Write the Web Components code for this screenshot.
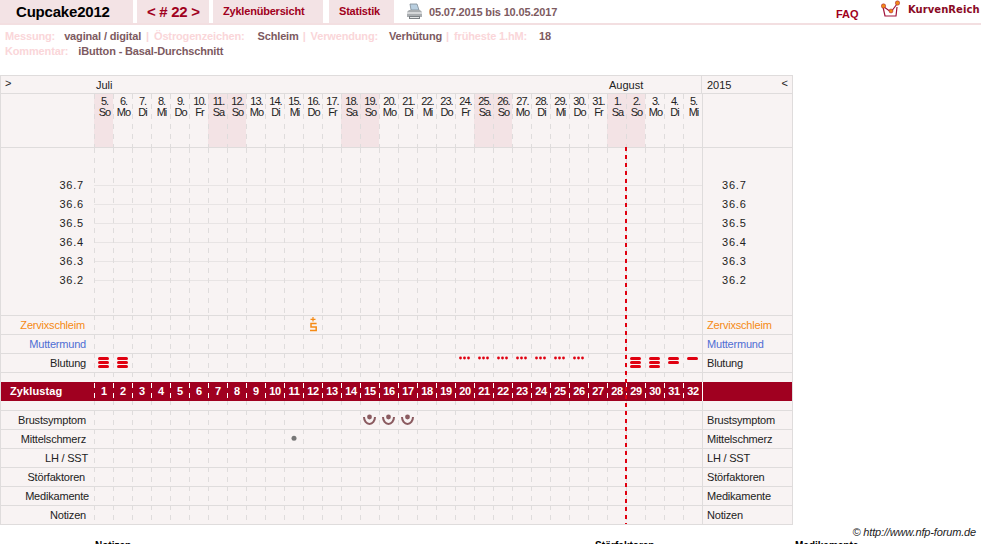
<!DOCTYPE html>
<html lang="de"><head><meta charset="utf-8"><title>Zyklus</title>
<style>
html,body{margin:0;padding:0;height:544px;overflow:hidden;background:#fff;font:11px "Liberation Sans",Arial,sans-serif}
</style></head><body>
<nfp-header></nfp-header>
<nfp-meta></nfp-meta>
<nfp-chart></nfp-chart>
<nfp-footer></nfp-footer>
<script>
const LINE='#dfdcdc', BG='#f8f3f3', WEEKEND='#f3e3e5', BAND='#a00020';
const dash=(c)=>`linear-gradient(to bottom,${c} 0 5px,transparent 5px 10px)`;

class Base extends HTMLElement{
  constructor(){super();this.attachShadow({mode:'open'});}
  connectedCallback(){ if(!this.shadowRoot.innerHTML) this.shadowRoot.innerHTML=this.render(); }
}
class NfpTab extends Base{ render(){return `<style>
  :host{display:flex;align-items:center;height:23px;background:${WEEKEND};color:#a00020;font:bold 11px "Liberation Sans",sans-serif;box-sizing:border-box;padding-bottom:1px;white-space:nowrap}
  </style><slot></slot>`;} }
customElements.define('nfp-tab',NfpTab);

class NfpHeader extends Base{ render(){return `<style>
  :host{display:flex;height:25px;box-sizing:border-box;border-bottom:2px solid #f3dfe1;width:981px;align-items:flex-start}
  .name{width:133px;color:#000;padding-left:16px;box-sizing:border-box}
  .name span{font-size:15px;font-weight:bold;letter-spacing:-.2px}
  .nav{width:72px;margin-left:4px;padding-left:10px;box-sizing:border-box}
  .nav span{font-size:15px;font-weight:bold;letter-spacing:-.3px}
  .ov{width:110px;margin-left:4px;padding-left:10px;box-sizing:border-box;letter-spacing:-.2px}
  .st{width:65px;margin-left:6px;padding-left:10px;box-sizing:border-box;letter-spacing:-.2px}
  svg{display:block}
  .pr{margin:3px 0 0 12px}
  .date{margin:6px 0 0 6px;font:bold 11px "Liberation Sans",sans-serif;color:#7d5a5f;line-height:13px;width:407px;letter-spacing:-.16px;white-space:nowrap}
  .faq{font:bold 11px "Liberation Sans",sans-serif;color:#a00020;margin-top:8px;line-height:13px;width:45px}
  .kr{font:bold 10px "DejaVu Sans",sans-serif;color:#8a0a25;margin:4px 0 0 7px;line-height:12px;white-space:nowrap;letter-spacing:.05px}
  </style>
  <nfp-tab class="name"><span>Cupcake2012</span></nfp-tab>
  <nfp-tab class="nav"><span>&lt; # 22 &gt;</span></nfp-tab>
  <nfp-tab class="ov">Zyklenübersicht</nfp-tab>
  <nfp-tab class="st">Statistik</nfp-tab>
  <svg class="pr" width="17" height="17" viewBox="0 0 17 17"><path d="M4 1h7l2 6H5z" fill="#b9cfe0" stroke="#7f8c96" stroke-width=".8"/><path d="M1 9l2-2h11l2 2v5H1z" fill="#a9adb0"/><path d="M1 9h15v2H1z" fill="#d5d7d9"/><path d="M3 13h11v3H3z" fill="#7d8286"/><path d="M4 14h9v1H4z" fill="#e3e5e6"/></svg>
  <span class="date">05.07.2015 bis 10.05.2017</span>
  <span class="faq">FAQ</span>
  <svg class="logo" width="20" height="18" viewBox="0 0 20 18"><path d="M2 7l2 9h11l1-9M3 7l7 5 6-8" fill="none" stroke="#a0123a" stroke-width="1.2"/><circle cx="2.5" cy="6" r="2.2" fill="#f08a18" stroke="#a0123a" stroke-width=".5"/><circle cx="16.5" cy="3" r="2.2" fill="#f08a18" stroke="#a0123a" stroke-width=".5"/><circle cx="10" cy="11" r="2" fill="#f08a18" stroke="#a0123a" stroke-width=".5"/></svg>
  <span class="kr">KurvenReich</span>`;} }
customElements.define('nfp-header',NfpHeader);

class NfpMeta extends Base{ render(){return `<style>
  :host{display:block;height:50px;box-sizing:border-box;padding:4px 0 0 5px;font:bold 11px/15px "Liberation Sans",sans-serif;color:#7d5a5f;white-space:nowrap;letter-spacing:-.15px}
  div{display:flex}
  .l{color:#fad6d9}.s{color:#fad6d9}
  </style>
  <div><span class="l">Messung:</span><span style="margin-left:9px">vaginal / digital</span><span class="s" style="margin:0 5px 0 5px">|</span><span class="l">Östrogenzeichen:</span><span style="margin-left:13px">Schleim</span><span class="s" style="margin:0 5px 0 4px">|</span><span class="l">Verwendung:</span><span style="margin-left:11px">Verhütung</span><span class="s" style="margin:0 5px 0 4px">|</span><span class="l">früheste 1.hM:</span><span style="margin-left:12px">18</span></div>
  <div><span class="l">Kommentar:</span><span style="margin-left:10px">iButton - Basal-Durchschnitt</span></div>`;} }
customElements.define('nfp-meta',NfpMeta);

class NfpMark extends Base{ render(){
  const k=this.getAttribute('kind');
  let inner='';
  const bar=(y)=>`<rect x="4" y="${y}" width="11" height="3" rx="1.5" fill="#e00010"/>`;
  if(k==='b3') inner=bar(4)+bar(8)+bar(12);
  if(k==='b2') inner=bar(4)+bar(8);
  if(k==='b1') inner=bar(4);
  if(k==='d') inner=[5.5,9.5,13.5].map(x=>`<circle cx="${x}" cy="5" r="1.4" fill="#e00010"/>`).join('');
  if(k==='s') inner=`<path d="M7.5 4.3h5M10 2v4.6" fill="none" stroke="#f58a14" stroke-width="1.2"/><path d="M13.6 8.6H8V12h5.2v3.6H7" fill="none" stroke="#f58a14" stroke-width="1.5"/>`;
  if(k==='u') inner=`<path d="M4 7A5.5 7 0 0 0 15 7" fill="none" stroke="#8a5a5f" stroke-width="2"/><circle cx="9.5" cy="7" r="2.4" fill="#8a5a5f"/>`;
  if(k==='p') inner=`<circle cx="10" cy="9.3" r="2.5" fill="#777"/>`;
  return `<style>:host{display:block;width:19px;height:19px}svg{display:block}</style><svg width="19" height="19" viewBox="0 0 19 19">${inner}</svg>`;
}}
customElements.define('nfp-mark',NfpMark);

class NfpRow extends Base{ render(){
  const label=this.getAttribute('label')||'', color=this.getAttribute('color')||'#222';
  const pr=this.getAttribute('pr')??8;
  const marks=Object.fromEntries((this.getAttribute('marks')||'').split(',').filter(Boolean).map(s=>s.split(':')));
  const h=this.getAttribute('h')||19;
  let cells='';
  for(let i=1;i<=32;i++) cells+=`<div class="c">${marks[i]?`<nfp-mark kind="${marks[i]}"></nfp-mark>`:''}</div>`;
  return `<style>
  :host{display:grid;grid-template-columns:93px repeat(32,19px) 90px;height:${h}px;box-sizing:border-box;border-top:1px solid ${LINE};font:11px/18px "Liberation Sans",sans-serif;color:${color};overflow:visible}
  .l{text-align:right;padding-right:${pr}px;white-space:nowrap;letter-spacing:-.2px}
  .r{border-left:1px solid ${LINE};padding-left:4px;box-sizing:border-box;white-space:nowrap;letter-spacing:-.2px}
  .c{background:${dash(LINE)} 0 -1px/1px 10px repeat-y;height:${h-1}px}
  .c nfp-mark{margin-top:-1px}
  </style><div class="l">${label}</div>${cells}<div class="r">${label}</div>`;
}}
customElements.define('nfp-row',NfpRow);

class NfpBand extends Base{ render(){
  let cells='';
  for(let i=1;i<=32;i++) cells+=`<div class="c">${i}</div>`;
  return `<style>
  :host{display:grid;grid-template-columns:93px repeat(32,19px) 90px;height:19px;background:${BAND};color:#fff;font:bold 11px/18px "Liberation Sans",sans-serif}
  .l{padding-left:9px;letter-spacing:.1px}
  .c{text-align:center;background:${dash('#fff')} 0 1px/1px 10px repeat-y;font-size:11px;letter-spacing:-.3px;padding-left:1px}
  .r{border-left:1px solid #fff}
  </style><div class="l">Zyklustag</div>${cells}<div class="r"></div>`;
}}
customElements.define('nfp-band',NfpBand);

class NfpTemps extends Base{ render(){
  const vals=['36.7','36.6','36.5','36.4','36.3','36.2'];
  let cols='';
  for(let i=0;i<32;i++) cols+='<i></i>';
  const rows=vals.map(v=>`<div class="t"><span class="a">${v}</span><span class="g"></span><span class="b">${v}</span></div>`).join('');
  return `<style>
  :host{display:block;height:168px;box-sizing:border-box;border-top:1px solid ${LINE};position:relative;font:11px/19px "Liberation Sans",sans-serif;color:#222;padding-top:28px}
  .t{display:grid;grid-template-columns:93px 608px 90px;height:19px}
  .a{text-align:right;padding-right:10px;letter-spacing:.8px}
  .b{border-left:1px solid ${LINE};padding-left:19px;letter-spacing:.8px}
  .g{background:linear-gradient(#e8e4e4,#e8e4e4) 0 9px/100% 1px no-repeat}
  .cols{position:absolute;left:93px;top:0;bottom:0;display:grid;grid-template-columns:repeat(32,19px)}
  .cols i{background:${dash(LINE)} 0 0/1px 10px repeat-y}
  .edge{position:absolute;left:701px;top:0;bottom:0;width:1px;background:${LINE}}
  </style><div class="cols">${cols}</div><div class="edge"></div>${rows}`;
}}
customElements.define('nfp-temps',NfpTemps);

class NfpDays extends Base{ render(){
  const names=['So','Mo','Di','Mi','Do','Fr','Sa'];
  let html='';
  const total=32;
  for(let i=0;i<total;i++){
    const d=new Date(Date.UTC(2015,6,5+i));
    const w=d.getUTCDay();
    html+=`<div class="d${(w===0||w===6)?' w':''}">${d.getUTCDate()}.<br>${names[w]}</div>`;
  }
  return `<style>
  :host{display:grid;grid-template-columns:93px repeat(32,19px) 90px;height:54px;box-sizing:border-box;border-top:1px solid ${LINE};font:11px/11px "Liberation Sans",sans-serif;color:#222}
  .d{text-align:center;padding:2px 0 0 2px;letter-spacing:-1px;background:${dash(LINE)} 0 0/1px 10px repeat-y;white-space:nowrap}
  .w{background:${dash(LINE)} 0 0/1px 10px repeat-y,${WEEKEND}}
  .r{border-left:1px solid ${LINE}}
  </style><div></div>${html}<div class="r"></div>`;
}}
customElements.define('nfp-days',NfpDays);

class NfpMonths extends Base{ render(){return `<style>
  :host{display:grid;grid-template-columns:95px 513px 93px 90px;height:18px;box-sizing:border-box;border-top:1px solid ${LINE};font:11px/18px "Liberation Sans",sans-serif;color:#222}
  .y{border-left:1px solid ${LINE};padding:0 4px 0 5px;display:flex;justify-content:space-between;grid-column:4;margin-left:-1px;width:91px;box-sizing:border-box}
  </style><div style="padding-left:4px;line-height:15px">&gt;</div><div>Juli</div><div>August</div><div class="y"><span>2015</span><span style="line-height:15px">&lt;</span></div>`;} }
customElements.define('nfp-months',NfpMonths);

class NfpChart extends Base{ render(){
  const blood='1:b3,2:b3,20:d,21:d,22:d,23:d,24:d,25:d,26:d,29:b3,30:b3,31:b2,32:b1';
  return `<style>
  :host{display:block;width:793px;box-sizing:border-box;border-left:1px solid ${LINE};border-right:1px solid ${LINE};border-bottom:1px solid ${LINE};background:${BG};position:relative}
  .ov{position:absolute;left:624px;top:72px;bottom:0;width:2px;background:repeating-linear-gradient(to bottom,#e00010 0 4px,transparent 4px 8px)}
  </style>
  <nfp-months></nfp-months><nfp-days></nfp-days><nfp-temps></nfp-temps>
  <nfp-row label="Zervixschleim" color="#f58a14" pr="9" marks="12:s"></nfp-row>
  <nfp-row label="Muttermund" color="#4f6ed4" pr="8"></nfp-row>
  <nfp-row label="Blutung" pr="8" marks="${blood}"></nfp-row>
  <nfp-row h="10"></nfp-row>
  <nfp-band></nfp-band>
  <nfp-row h="9" style="border-top:0"></nfp-row>
  <nfp-row label="Brustsymptom" pr="8" marks="15:u,16:u,17:u"></nfp-row>
  <nfp-row label="Mittelschmerz" pr="8" marks="11:p"></nfp-row>
  <nfp-row label="LH / SST" pr="6"></nfp-row>
  <nfp-row label="Störfaktoren" pr="9"></nfp-row>
  <nfp-row label="Medikamente" pr="5"></nfp-row>
  <nfp-row label="Notizen" pr="8"></nfp-row>
  <div class="ov"></div>`;
}}
customElements.define('nfp-chart',NfpChart);

class NfpFooter extends Base{ render(){return `<style>
  :host{display:block;width:981px;font:11px/13px "Liberation Sans",sans-serif;color:#000}
  .c{text-align:right;padding-right:5px;font-style:italic;color:#222;margin-top:1px;height:13px;letter-spacing:-.15px}
  .h{display:grid;grid-template-columns:500px 200px 1fr;padding-left:95px;font-weight:bold;font-size:10px}
  </style><div class="c">© http://www.nfp-forum.de</div><div class="h"><span>Notizen</span><span>Störfaktoren</span><span>Medikamente</span></div>`;} }
customElements.define('nfp-footer',NfpFooter);
</script>
</body></html>
